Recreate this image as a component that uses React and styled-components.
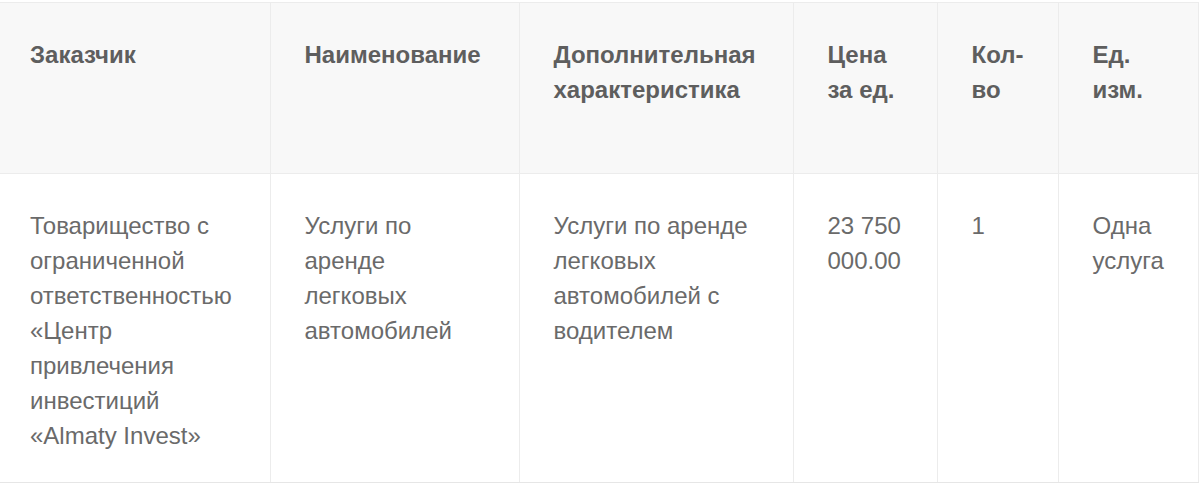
import React from "react";
import styled, { createGlobalStyle } from "styled-components";

const Global = createGlobalStyle`
  html, body { margin: 0; padding: 0; background: #fff; }
  body, table, th, td { font-family: "Liberation Sans", Arial, sans-serif; }
`;

const Wrap = styled.div`
  width: 1200px;
  height: 484px;
  overflow: hidden;
  padding-top: 2px;
  box-sizing: border-box;
`;

const Table = styled.table`
  width: 1198px;
  border-collapse: collapse;
  table-layout: fixed;
  font-family: "Liberation Sans", Arial, sans-serif;
  border-top: 1px solid #ececec;
  border-right: 1px solid #ececec;
`;

const Th = styled.th`
  background: #f8f8f8;
  color: #5e5e5e;
  font-family: "Liberation Sans", Arial, sans-serif;
  font-weight: bold;
  font-size: 24px;
  line-height: 35px;
  text-align: left;
  vertical-align: top;
  padding: 34px 34px 34px 34px;
  height: 102px;
  border-left: 1px solid #ececec;
  border-bottom: 1px solid #ececec;
  &:first-child { padding-left: 30px; border-left: none; }
`;

const Td = styled.td`
  color: #6a6a6a;
  font-family: "Liberation Sans", Arial, sans-serif;
  font-size: 24px;
  line-height: 35px;
  text-align: left;
  vertical-align: top;
  padding: 34px 34px 29px 34px;
  border-left: 1px solid #ececec;
  border-bottom: 1px solid #e6e6e6;
  &:first-child { padding-left: 30px; border-left: none; }
`;

const Col = styled.col`
  width: ${(p) => p.$w}px;
`;

const widths = [270, 249, 274, 144, 121, 140];

const headers = [
  "Заказчик",
  "Наименование",
  "Дополнительная характеристика",
  "Цена за ед.",
  "Кол-во",
  "Ед. изм.",
];

const row = [
  "Товарищество с ограниченной ответственностью «Центр привлечения инвестиций «Almaty Invest»",
  "Услуги по аренде легковых автомобилей",
  "Услуги по аренде легковых автомобилей с водителем",
  "23 750 000.00",
  "1",
  "Одна услуга",
];

export default function App() {
  return (
    <>
      <Global />
      <Wrap>
        <Table>
          <colgroup>
            {widths.map((w, i) => (
              <Col key={i} $w={w} />
            ))}
          </colgroup>
          <thead>
            <tr>
              {headers.map((h, i) => (
                <Th key={i}>{h}</Th>
              ))}
            </tr>
          </thead>
          <tbody>
            <tr>
              {row.map((c, i) => (
                <Td key={i}>{c}</Td>
              ))}
            </tr>
          </tbody>
        </Table>
      </Wrap>
    </>
  );
}
